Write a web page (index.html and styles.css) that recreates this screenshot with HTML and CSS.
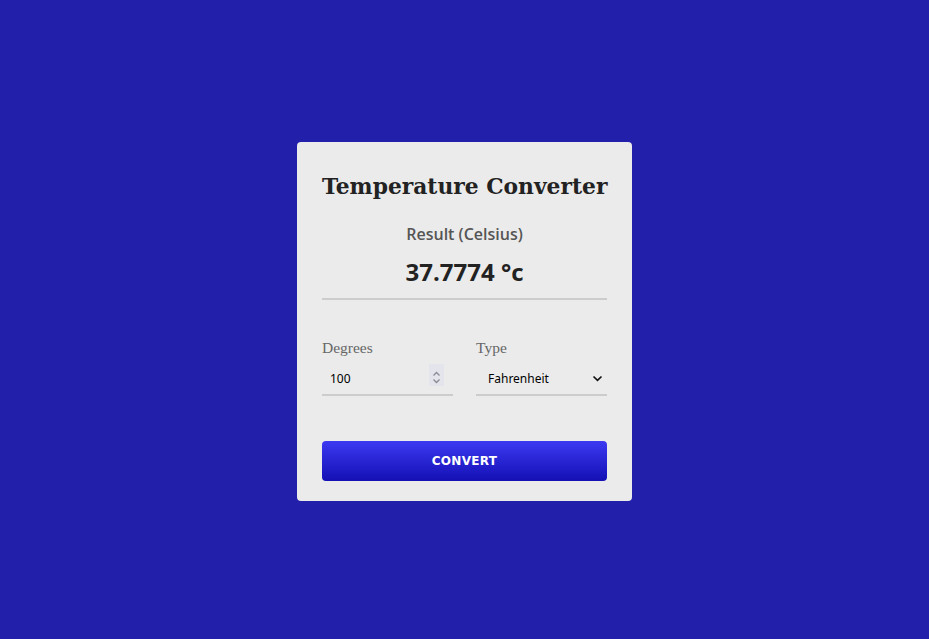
FILE: index.html
```html
<!DOCTYPE html>
<html>
<head>
<meta charset="utf-8">
<link rel="stylesheet" href="styles.css">
</head>
<body>
<main class="page">
  <section class="card">
    <h1 class="title">Temperature Converter</h1>
    <div class="result">
      <div class="result-label">Result (Celsius)</div>
      <div class="result-value">37.7774 °c</div>
    </div>
    <div class="fields">
      <label class="field">
        <span class="field-label">Degrees</span>
        <span class="control-wrap">
          <input class="control" type="number" value="100">
          <span class="spinner">
            <svg width="15" height="22" viewBox="0 0 15 22" fill="none" stroke="#8a8a96" stroke-width="1.3">
              <path d="M4.5 11.5 L7.5 8.5 L10.5 11.5"/>
              <path d="M4.5 15.5 L7.5 18.5 L10.5 15.5"/>
            </svg>
          </span>
        </span>
      </label>
      <label class="field">
        <span class="field-label">Type</span>
        <span class="control-wrap">
          <select class="control select">
            <option>Fahrenheit</option>
            <option>Celsius</option>
            <option>Kelvin</option>
          </select>
          <svg class="chevron" width="11" height="7" viewBox="0 0 11 7" fill="none" stroke="#111" stroke-width="1.7">
            <path d="M1.5 1.5 L5.5 5.3 L9.5 1.5"/>
          </svg>
        </span>
      </label>
    </div>
    <button class="convert">CONVERT</button>
  </section>
</main>
</body>
</html>
```
FILE: styles.css
```css
html, body {
  margin: 0;
  padding: 0;
  height: 100%;
}
body {
  background: #2220ab;
}
.page {
  height: 100%;
  display: flex;
  align-items: center;
  justify-content: center;
}
.card {
  width: 285px;
  padding: 25px 25px 20px;
  background: #ebebeb;
  border-radius: 4px;
  box-sizing: content-box;
  margin-top: 4px;
}
.title {
  margin: 0;
  font-family: "DejaVu Serif", serif;
  font-weight: bold;
  font-size: 21.8px;
  line-height: 40px;
  color: #222;
  text-align: center;
  white-space: nowrap;
}
.result {
  text-align: center;
  border-bottom: 2px solid #cccccc;
  padding-bottom: 9px;
  margin-top: 15px;
}
.result-label {
  font-family: "Open Sans", sans-serif;
  font-weight: 600;
  font-size: 16px;
  line-height: 24px;
  color: #555;
}
.result-value {
  font-family: "Open Sans", sans-serif;
  font-weight: bold;
  font-size: 24px;
  line-height: 34px;
  color: #222;
  margin-top: 9px;
}
.fields {
  display: flex;
  gap: 23px;
  margin-top: 38px;
}
.field {
  flex: 1 1 0;
  min-width: 0;
  display: flex;
  flex-direction: column;
}
.field-label {
  font-family: "Liberation Serif", serif;
  font-size: 15.5px;
  line-height: 20px;
  color: #666;
}
.control-wrap {
  position: relative;
  margin-top: 5px;
  height: 31px;
  display: flex;
  align-items: center;
  border-bottom: 2px solid #cccccc;
}
.control {
  flex: 1;
  min-width: 0;
  height: 100%;
  border: none;
  background: transparent;
  font-family: "Noto Sans", sans-serif;
  font-size: 12px;
  color: #000;
  padding: 0 8px;
  margin: 0;
  outline: none;
  -webkit-appearance: none;
  appearance: none;
  -moz-appearance: textfield;
}
.control::-webkit-inner-spin-button,
.control::-webkit-outer-spin-button {
  -webkit-appearance: none;
  margin: 0;
}
.select {
  padding: 0 20px 0 12px;
}
.spinner {
  width: 15px;
  height: 22px;
  margin-right: 9px;
  margin-top: -7px;
  background: #e4e4ec;
  display: flex;
}
.chevron {
  position: absolute;
  right: 4px;
  top: 12px;
  pointer-events: none;
}
.convert {
  display: block;
  width: 100%;
  margin-top: 45px;
  height: 40px;
  border: none;
  border-radius: 4px;
  background: linear-gradient(to bottom, #3c39f2, #1410b4);
  color: #fff;
  font-family: "DejaVu Sans", sans-serif;
  font-weight: bold;
  font-size: 12px;
  letter-spacing: 0.3px;
}
```
